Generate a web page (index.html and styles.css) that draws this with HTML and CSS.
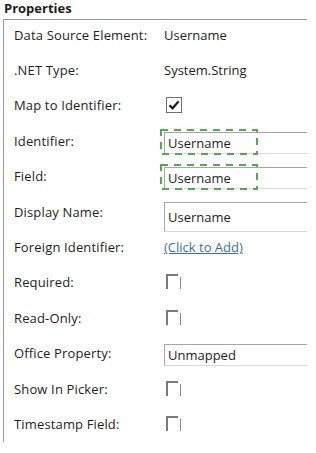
FILE: index.html
```html
<!DOCTYPE html>
<html lang="en">
<head>
    <title>Properties</title>
    <link rel="stylesheet" href="styles.css">
</head>
<body>
<div class="panel">
    <div class="panel-title">Properties</div>

    <div class="group">
        <div class="row">
            <span class="label">Data Source Element:</span>
            <span class="value">Username</span>
        </div>
        <div class="row">
            <span class="label">.NET Type:</span>
            <span class="value">System.String</span>
        </div>
        <div class="row">
            <span class="label">Map to Identifier:</span>
            <span class="value">
                <svg class="check" width="16" height="16" viewBox="0 0 16 16">
                    <rect x="0.5" y="0.5" width="15" height="15" fill="#fff" stroke="#6e6e6e"/>
                    <path d="M3.5 8.2 L6.6 11.3 L12.6 4.4" fill="none" stroke="#1a1a1a" stroke-width="2.2"/>
                </svg>
            </span>
        </div>
        <div class="row">
            <span class="label">Identifier:</span>
            <span class="value">
                <span class="textbox shifted">Username</span>
                <!-- drop target highlight -->
                <svg class="highlight" width="98" height="26" viewBox="0 0 98 26">
                    <rect x="1" y="1" width="96" height="24" fill="none" stroke="#4fae4a" stroke-width="2" stroke-dasharray="7 6"/>
                </svg>
            </span>
        </div>
        <div class="row">
            <span class="label">Field:</span>
            <span class="value">
                <span class="textbox shifted">Username</span>
                <svg class="highlight" width="98" height="26" viewBox="0 0 98 26">
                    <rect x="1" y="1" width="96" height="24" fill="none" stroke="#4fae4a" stroke-width="2" stroke-dasharray="7 6"/>
                </svg>
            </span>
        </div>
        <div class="row">
            <span class="label">Display Name:</span>
            <span class="value">
                <span class="textbox tall">Username</span>
            </span>
        </div>
        <div class="row">
            <span class="label">Foreign Identifier:</span>
            <span class="value"><a href="#" class="link">(Click to Add)</a></span>
        </div>
        <div class="row">
            <span class="label">Required:</span>
            <span class="value">
                <svg class="box" width="16" height="16" viewBox="0 0 16 16">
                    <path d="M1 15 V1 H12" fill="none" stroke="#7a7a7a" stroke-width="2"/>
                    <path d="M14.5 3 V15" fill="none" stroke="#8a8a8a" stroke-width="1"/>
                </svg>
            </span>
        </div>
        <div class="row">
            <span class="label">Read-Only:</span>
            <span class="value">
                <svg class="box" width="16" height="16" viewBox="0 0 16 16">
                    <path d="M1 15 V1 H12" fill="none" stroke="#7a7a7a" stroke-width="2"/>
                    <path d="M14.5 3 V15" fill="none" stroke="#8a8a8a" stroke-width="1"/>
                </svg>
            </span>
        </div>
        <div class="row">
            <span class="label">Office Property:</span>
            <span class="value">
                <span class="textbox lowered">Unmapped</span>
            </span>
        </div>
        <div class="row">
            <span class="label">Show In Picker:</span>
            <span class="value">
                <svg class="box" width="16" height="16" viewBox="0 0 16 16">
                    <path d="M1 15 V1 H12" fill="none" stroke="#7a7a7a" stroke-width="2"/>
                    <path d="M14.5 3 V15" fill="none" stroke="#8a8a8a" stroke-width="1"/>
                </svg>
            </span>
        </div>
        <div class="row">
            <span class="label">Timestamp Field:</span>
            <span class="value">
                <svg class="box" width="16" height="16" viewBox="0 0 16 16">
                    <path d="M1 15 V1 H12" fill="none" stroke="#7a7a7a" stroke-width="2"/>
                    <path d="M14.5 3 V15" fill="none" stroke="#8a8a8a" stroke-width="1"/>
                </svg>
            </span>
        </div>
    </div>
</div>
</body>
</html>
```

FILE: styles.css
```css
body {
    margin: 0;
    background-color: white;
    font-family: "Open Sans", "Noto Sans", sans-serif;
    font-size: 13px;
    color: #1e1e1e;
}

.panel {
    width: 316px;
    height: 453px;
}

.panel-title {
    font-weight: bold;
    padding-left: 4px;
    height: 19px;
    line-height: 16px;
}

.group {
    margin-left: 3px;
    width: 304px;
    height: 423px;
    border-top: 1px solid #9a9a9a;
    border-left: 1px solid #9a9a9a;
    padding-left: 10px;
    box-sizing: border-box;
}

.row {
    display: flex;
    align-items: center;
    height: 35.4px;
}

.row:first-child {
    margin-top: -3px;
}

.label {
    width: 150px;
    flex: none;
    letter-spacing: 0.15px;
}

.value {
    flex: 1;
    position: relative;
    display: flex;
    align-items: center;
}

.check, .box {
    margin-left: 2px;
}

.textbox {
    display: block;
    width: 100%;
    height: 22px;
    line-height: 20px;
    padding-left: 3px;
    border-top: 1px solid #a6a6a6;
    border-left: 1px solid #a6a6a6;
    border-bottom: 1px solid #dadada;
    box-sizing: border-box;
}

.textbox.shifted {
    margin-top: 4px;
}

.textbox.lowered {
    margin-top: 3px;
}

.textbox.tall {
    height: 30px;
    line-height: 28px;
    margin-top: 10px;
}

.highlight {
    position: absolute;
    left: -4px;
    top: 1px;
}

.link {
    color: #3b6ea8;
    text-decoration: underline;
}
```
